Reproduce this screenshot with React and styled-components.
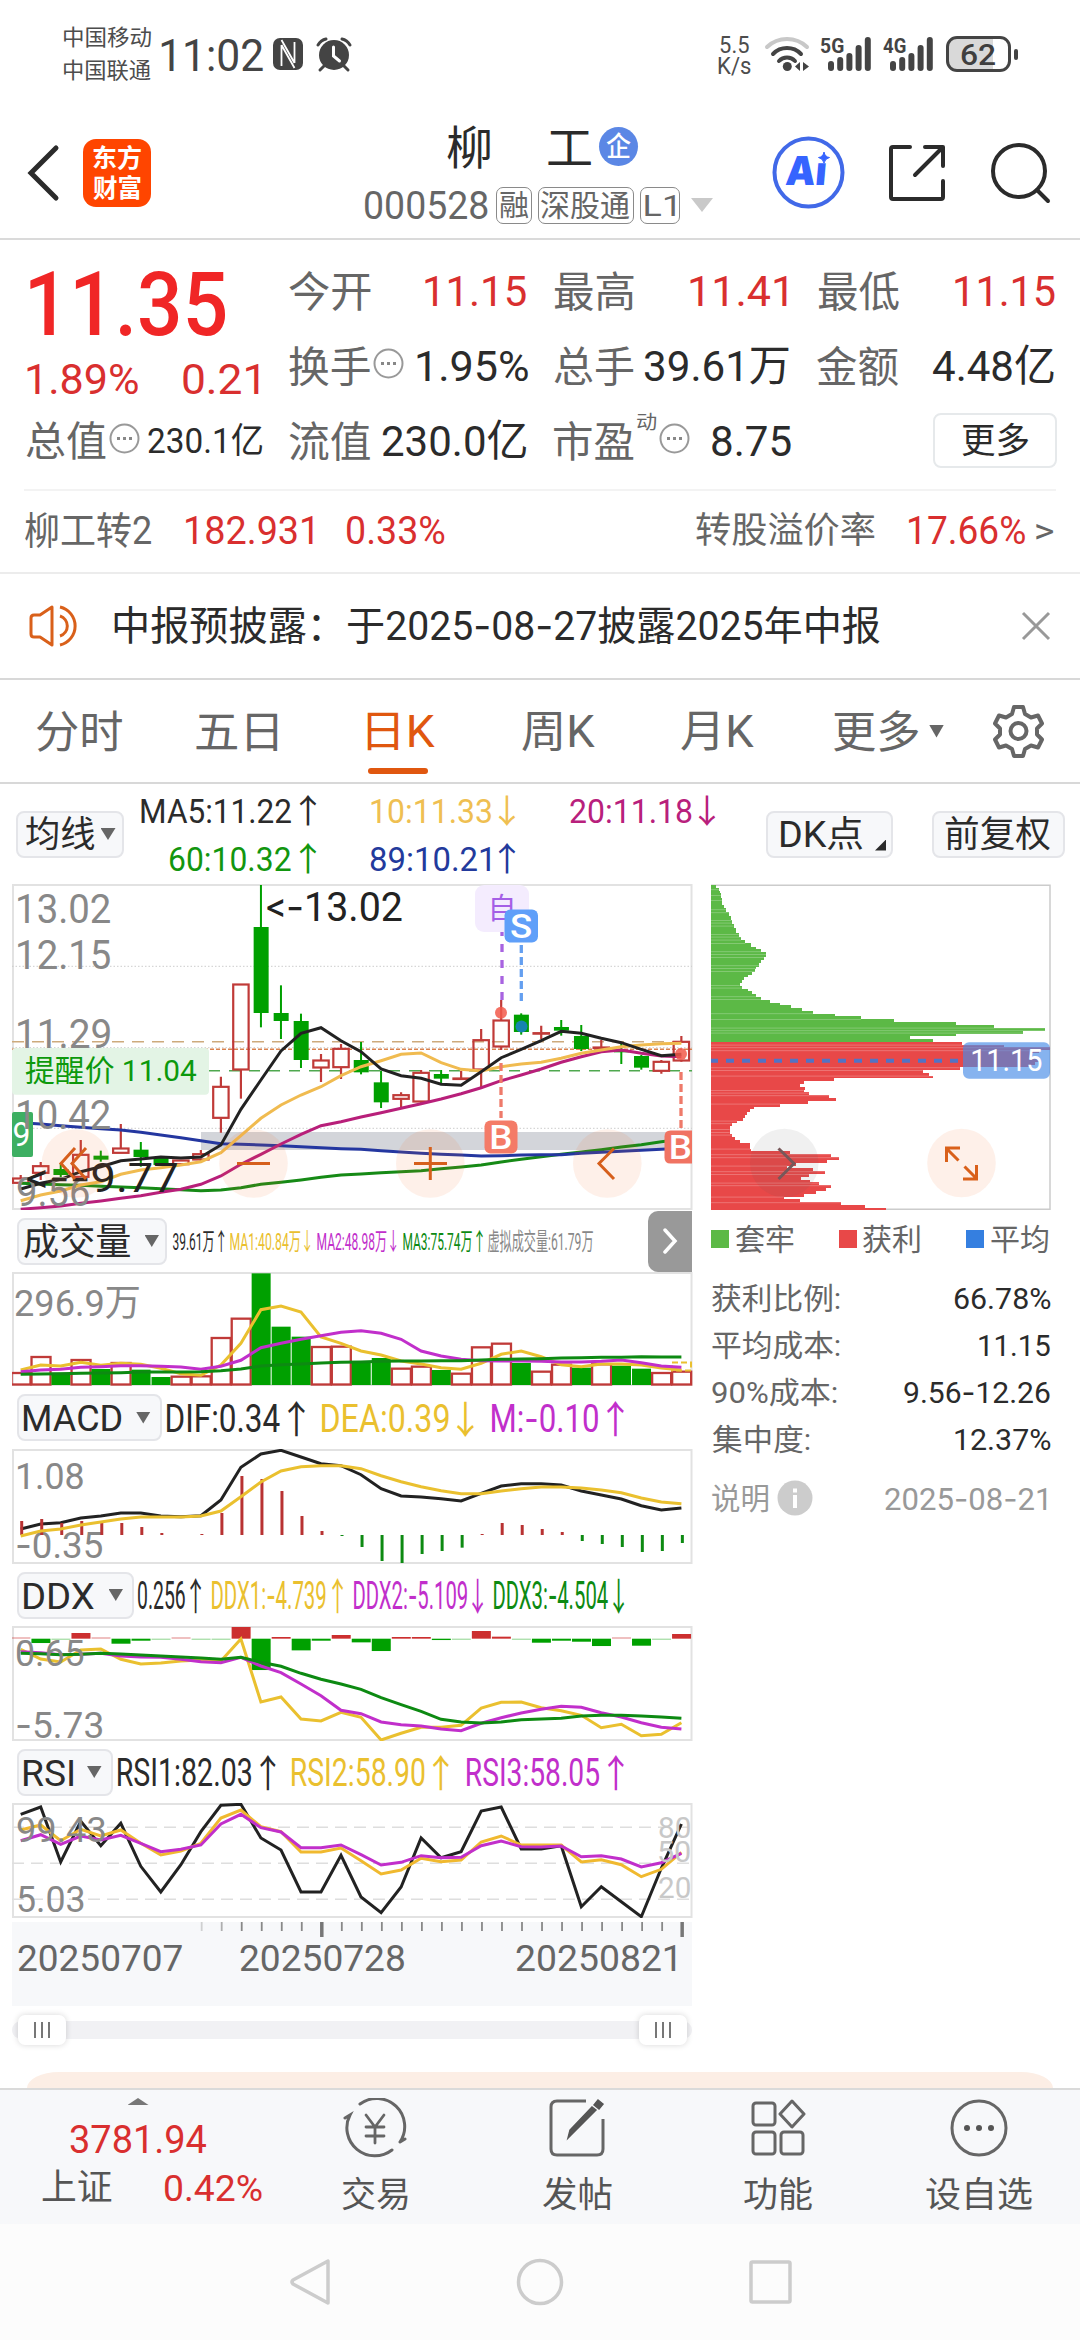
import React from "react";
import styled, { createGlobalStyle } from "styled-components";

const FONT = '"Roboto", "Noto Sans CJK SC", sans-serif';
const DASH_FONT = '"Inter", sans-serif';
const RED = "#d92f2f";
const GREY = "#666";
const DARK = "#2b2b2b";
const YELLOW = "#eac02f";
const PURPLE = "#c12fcb";
const GREEN = "#0d8a12";

const canvas = document.createElement("canvas").getContext("2d");

// hyphens are set in a face with a longer dash
const runs = (text) => text.split(/(-+)/).filter(Boolean);
const isDash = (run) => run[0] === "-";

// measures the ink of a string and returns what is needed to fit it in w
const fit = (text, size, weight, w) => {
  const parts = runs(text);
  let ink = 0;
  let shift = 0;
  parts.forEach((run, i) => {
    canvas.font = `${weight} ${size}px ${isDash(run) ? DASH_FONT : FONT}`;
    const m = canvas.measureText(run);
    if (i === 0) {
      shift = m.actualBoundingBoxLeft;
      ink += shift;
    }
    ink += i === parts.length - 1 ? m.actualBoundingBoxRight : m.width;
  });
  return { scale: w / ink, shift };
};

const Txt = ({ children, size, w, color = DARK, weight = 400, ml = 0, mt = 0 }) => {
  const { scale, shift } = fit(children, size, weight, w);
  const dy = /[\dA-Za-z]/.test(children) ? 0.5 : size * 0.04;
  return (
    <TextBox $w={w} $size={size} $color={color} $weight={weight} $ml={ml} $mt={mt}>
      <Glyphs style={{ transform: `translateY(${dy}px) scaleX(${scale}) translateX(${shift}px)` }}>
        {runs(children).map((run, i) => (isDash(run) ? <Dash key={i}>{run}</Dash> : run))}
      </Glyphs>
    </TextBox>
  );
};

const ChartText = ({ children, x, y, w, size, color = "#888", weight = 400 }) => {
  const { scale, shift } = fit(children, size, weight, w);
  return (
    <text
      transform={`translate(${x} ${y}) scale(${scale} 1) translate(${shift} 0)`}
      fontFamily={FONT}
      fontSize={size}
      fontWeight={weight}
      fill={color}
    >
      {runs(children).map((run, i) => (
        <tspan key={i} fontFamily={isDash(run) ? DASH_FONT : FONT}>{run}</tspan>
      ))}
    </text>
  );
};

const px = (i) => 20.7 + 20.02 * i;
const points = (list, y0) =>
  list.map((v, i) => `${px(i).toFixed(1)},${(y0 + v / 3).toFixed(1)}`).join(" ");

const Line = ({ data, y0, color, width = 3 }) => (
  <polyline points={points(data, y0)} fill="none" stroke={color} strokeWidth={width} />
);

// [up, high, body top, body bottom, low]
const candles = [
  [1, 915, 924, 940, 940],
  [1, 876, 887, 910, 930],
  [0, 880, 897, 915, 925],
  [1, 810, 853, 922, 925],
  [0, 842, 857, 869, 875],
  [1, 762, 834, 850, 850],
  [0, 816, 839, 861, 890],
  [0, 862, 862, 885, 885],
  [1, 870, 870, 884, 884],
  [1, 840, 851, 870, 875],
  [1, 620, 649, 745, 788],
  [1, 342, 342, 600, 686],
  [0, 45, 171, 429, 472],
  [0, 346, 429, 453, 507],
  [0, 431, 453, 570, 594],
  [1, 552, 570, 594, 636],
  [1, 522, 535, 593, 627],
  [0, 516, 570, 607, 613],
  [0, 602, 637, 697, 714],
  [1, 667, 674, 688, 712],
  [1, 600, 607, 696, 698],
  [0, 600, 612, 626, 640],
  [1, 602, 624, 627, 628],
  [1, 477, 509, 600, 655],
  [1, 390, 450, 531, 540],
  [0, 430, 434, 486, 494],
  [1, 467, 488, 491, 508],
  [0, 450, 471, 482, 497],
  [0, 465, 498, 537, 543],
  [1, 510, 531, 534, 548],
  [0, 520, 543, 547, 582],
  [0, 555, 558, 593, 599],
  [1, 570, 574, 604, 611],
  [1, 498, 514, 573, 575],
];

const ma5 = [957, 940, 928, 905, 890, 872, 867, 861, 864, 861, 825, 718, 630, 543, 490, 473, 512, 545, 597, 617, 625, 643, 646, 605, 563, 538, 512, 484, 490, 505, 518, 538, 557, 553];
const ma10 = [992, 975, 963, 945, 935, 913, 900, 893, 885, 875, 848, 797, 745, 705, 675, 650, 617, 590, 572, 553, 549, 578, 598, 603, 590, 582, 577, 565, 550, 540, 530, 525, 521, 520];
const ma20 = [1018, 1013, 1008, 1000, 993, 985, 977, 967, 958, 943, 918, 883, 853, 822, 793, 767, 755, 741, 728, 715, 701, 687, 671, 653, 632, 615, 597, 577, 560, 545, 540, 550, 558, 560];
const ma60 = [940, 942, 944, 946, 949, 951, 953, 956, 959, 962, 960, 953, 943, 937, 930, 922, 915, 912, 908, 905, 902, 896, 891, 885, 876, 868, 860, 853, 846, 839, 831, 824, 815, 808];
const ma89 = [758, 762, 767, 772, 776, 780, 787, 795, 803, 812, 821, 823, 825, 827, 830, 833, 836, 838, 842, 846, 850, 853, 855, 858, 857, 855, 854, 854, 850, 847, 844, 841, 838, 835];

// [top, right edge] of every step of the chip distribution
const trapped = [[45, 78], [54, 86], [62, 89], [70, 92], [85, 96], [105, 102], [115, 108], [127, 116], [138, 121], [150, 124], [162, 130], [175, 137], [190, 147], [200, 152], [210, 165], [220, 182], [230, 198], [238, 213], [246, 228], [262, 222], [270, 213], [280, 207], [290, 198], [298, 194], [306, 186], [315, 172], [322, 161], [330, 154], [340, 148], [348, 155], [356, 172], [364, 186], [373, 198], [381, 212], [389, 238], [398, 270], [406, 303], [415, 336], [423, 368], [431, 434], [439, 512], [448, 610], [456, 797], [464, 911], [473, 1065], [482, 999], [491, 797], [499, 660], [507, 728], [516, 0]];
const profit = [[516, 815], [524, 942], [532, 1079], [541, 1045], [549, 1018], [566, 1045], [576, 1035], [584, 1018], [591, 808], [600, 697], [608, 715], [617, 728], [625, 431], [634, 340], [642, 328], [651, 344], [659, 340], [667, 356], [676, 416], [684, 437], [693, 354], [701, 269], [710, 191], [718, 180], [727, 171], [735, 164], [743, 158], [752, 141], [760, 124], [768, 118], [793, 124], [802, 135], [810, 148], [819, 180], [828, 178], [836, 183], [844, 298], [853, 423], [861, 446], [870, 410], [878, 318], [887, 290], [895, 367], [904, 405], [912, 356], [921, 333], [929, 360], [937, 386], [946, 422], [954, 408], [963, 378], [971, 340], [980, 280], [988, 330], [996, 453], [1005, 525], [1014, 587], [1020, 0]];
const seams = [58, 75, 90, 118, 127, 150, 158, 167, 192, 200, 209, 219, 244, 252, 261, 286, 294, 303, 345, 353, 379, 387, 430, 447, 473, 481, 488, 524, 532, 541, 592, 600, 617, 660, 668, 676, 701, 752, 760, 777, 786, 794, 836, 853, 862, 887, 904, 912, 938, 946, 980, 997];

// r = rising, g = falling, then the top of the bar
const volume = "r516 r468 g518 r477 g507 r486 g509 g531 r527 r526 r411 r353 g220 g380 g410 r438 r437 g484 g474 r503 r497 g510 r518 r439 r428 g489 r512 r491 g503 r490 g497 g506 r516 r512"
  .split(" ")
  .map((s) => [s[0], Number(s.slice(1))]);
const vol1 = [510, 495, 498, 487, 496, 490, 493, 505, 521, 526, 495, 430, 329, 318, 336, 411, 430, 453, 465, 483, 492, 503, 508, 490, 463, 453, 470, 494, 500, 492, 492, 495, 504, 510];
const vol2 = [515, 510, 508, 502, 500, 497, 497, 499, 501, 508, 499, 481, 443, 430, 418, 407, 397, 392, 400, 418, 453, 468, 478, 482, 483, 483, 484, 486, 486, 484, 480, 488, 498, 502];
const vol3 = [523, 522, 521, 520, 519, 518, 516, 516, 516, 515, 512, 507, 498, 494, 492, 489, 487, 486, 484, 483, 483, 482, 482, 480, 478, 477, 476, 474, 473, 472, 472, 470, 471, 471];

const macd = [273, 267, 279, 273, 279, 279, 291, 309, 315, 312, 249, 138, 147, 183, 258, 303, 318, 351, 393, 399, 372, 363, 353, 312, 279, 285, 297, 306, 333, 342, 351, 366, 363, 339];
const dif = [297, 282, 278, 264, 258, 249, 249, 258, 260, 257, 210, 112, 72, 61, 81, 101, 107, 134, 176, 198, 201, 206, 213, 190, 168, 161, 161, 165, 183, 195, 207, 227, 240, 234];
const dea = [318, 303, 297, 285, 276, 267, 261, 261, 261, 258, 243, 200, 156, 123, 110, 107, 107, 116, 137, 155, 170, 182, 191, 191, 183, 176, 171, 171, 174, 180, 188, 204, 216, 221];

const ddx = [622, 639, 629, 609, 622, 641, 632, 629, 622, 629, 629, 591, 720, 621, 661, 632, 615, 637, 663, 621, 621, 630, 629, 603, 620, 629, 638, 632, 635, 648, 622, 647, 629, 612];
const ddx1 = [658, 687, 696, 660, 657, 688, 702, 699, 693, 690, 693, 627, 816, 801, 867, 873, 847, 862, 930, 910, 892, 892, 886, 834, 817, 816, 833, 842, 856, 893, 883, 917, 913, 878];
const ddx2 = [665, 668, 674, 673, 670, 678, 681, 682, 688, 695, 698, 682, 708, 728, 762, 797, 841, 851, 876, 884, 888, 897, 902, 880, 863, 849, 838, 829, 832, 848, 861, 878, 892, 897];
const ddx3 = [670, 671, 674, 673, 670, 672, 675, 678, 681, 684, 688, 682, 697, 709, 730, 748, 762, 778, 803, 824, 844, 868, 876, 879, 876, 869, 867, 865, 858, 856, 856, 858, 861, 865];

const rsi1 = [223, 201, 366, 244, 317, 250, 379, 456, 374, 275, 196, 193, 294, 330, 456, 456, 346, 471, 518, 441, 294, 353, 335, 213, 201, 327, 327, 317, 500, 440, 485, 530, 385, 252];
const rsi2 = [270, 255, 302, 268, 288, 270, 310, 345, 333, 310, 234, 210, 260, 275, 336, 336, 324, 362, 402, 390, 355, 365, 360, 306, 288, 315, 315, 315, 366, 359, 374, 410, 388, 337];
const rsi3 = [302, 284, 313, 288, 300, 286, 310, 335, 328, 315, 252, 223, 263, 276, 323, 323, 315, 344, 375, 367, 347, 353, 352, 317, 303, 320, 321, 318, 350, 347, 357, 381, 368, 340];

const StatusBar = () => (
  <Status>
    <Stack $ml={64} $pt={20} $row={33}>
      <Txt size={22} w={87} color="#4d4d4d">中国移动</Txt>
      <Txt size={22} w={87} color="#4d4d4d">中国联通</Txt>
    </Stack>
    <Txt size={45} w={102} ml={10} color="#444">11:02</Txt>
    <Icon $ml={10} width="30" height="34" viewBox="0 0 30 34">
      <rect x="0" y="1" width="30" height="32" rx="7" fill="#444" />
      <path d="M8.500 8v21M21.500 5v21M8.500 3l13 23M8.500 8l13 23" stroke="#fff" strokeWidth="1.800" fill="none" />
    </Icon>
    <Icon $ml={13} width="36" height="34" viewBox="0 0 36 34">
      <circle cx="18" cy="18" r="15" fill="#444" />
      <path d="M2 8q3-5 8-6M34 8q-3-5-8-6M8 29l-4 4M28 29l4 4" stroke="#444" strokeWidth="3" strokeLinecap="round" fill="none" />
      <path d="M17.500 10v9l6 5" stroke="#fff" strokeWidth="3" fill="none" strokeLinecap="round" />
    </Icon>
    <Stack $ml={366} $pt={33} $row={21.5}>
      <Txt size={24} w={29} ml={2} color="#4d4d4d">5.5</Txt>
      <Txt size={24} w={33} color="#4d4d4d">K/s</Txt>
    </Stack>
    <Icon $ml={13} width="46" height="36" viewBox="0 0 46 36">
      <g fill="none" strokeLinecap="round" strokeWidth="4">
        <path d="M3 11A29 29 0 0 1 43 11" stroke="#c8c8c8" />
        <path d="M9 18A19.6 19.6 0 0 1 37 18" stroke="#444" />
        <path d="M15 25A11 11 0 0 1 31 25" stroke="#444" />
      </g>
      <circle cx="23.3" cy="30.5" r="4.5" fill="#444" />
      <path d="M36 26v9l-5-4.500zM39 26l6 4.500-6 4.500z" fill="#444" />
    </Icon>
    <Signal label="5G" ml={11} />
    <Signal label="4G" ml={12} />
    <Battery>
      <Txt size={30} w={34} weight={500} color="#3f3f3f">62</Txt>
    </Battery>
    <BatteryNub />
  </Status>
);

const Signal = ({ label, ml }) => (
  <Icon $ml={ml} width="50" height="34" viewBox="0 0 50 34">
    <ChartText x={0} y={16} w={23} size={21} weight={700} color="#444">{label}</ChartText>
    {[10, 14, 18, 26, 34].map((h, i) => (
      <rect key={h} x={7 + i * 9.2} y={34 - h} width="6" height={h} rx="3" fill="#444" />
    ))}
  </Icon>
);

const Header = () => (
  <HeaderBar>
    <Icon $ml={27} width="34" height="58" viewBox="0 0 34 58">
      <path d="M29 4L4 29l25 25" fill="none" stroke="#2b2b2b" strokeWidth="5" strokeLinecap="round" />
    </Icon>
    <Logo>
      <Txt size={25} w={48} weight={700} color="#fff">东方</Txt>
      <Txt size={25} w={48} weight={700} color="#fff">财富</Txt>
    </Logo>
    <TitleBlock>
      <TitleRow>
        <Txt size={46} w={43} ml={82}>柳</Txt>
        <Txt size={46} w={43} ml={58}>工</Txt>
        <Badge>
          <Txt size={27} w={25} weight={500} color="#fff">企</Txt>
        </Badge>
      </TitleRow>
      <TitleRow>
        <Txt size={38} w={123} color={GREY}>000528</Txt>
        <Tag $w={36.5} $ml={7.5}><Txt size={29} w={28} color={GREY}>融</Txt></Tag>
        <Tag $w={96.5} $ml={5.5}><Txt size={30} w={89} color={GREY}>深股通</Txt></Tag>
        <Tag $w={40.5} $ml={5.5}><Txt size={30} w={30} color={GREY}>L1</Txt></Tag>
        <Caret $ml={11} $w={22} $h={14} $color="#c9c9c9" />
      </TitleRow>
    </TitleBlock>
    <Icon $ml={60} width="73" height="73" viewBox="0 0 73 73">
      <circle cx="36.500" cy="36.500" r="34" fill="none" stroke="#4169e8" strokeWidth="4" />
      <text x="17" y="49.500" transform="skewX(-5)" fontFamily="Inter" fontWeight="900" fontSize="40" fill="#3664ff" textLength="41" lengthAdjust="spacingAndGlyphs">Aı</text>
      <path d="M52 16q1 5 5.500 5.500q-4.500 1-5.500 5.500q-1-4.500-5.500-5.500q4.500-.5 5.500-5.500z" fill="#3664ff" stroke="#3664ff" />
    </Icon>
    <Icon $ml={43} width="58" height="58" viewBox="0 0 58 58">
      <path d="M22 3H5q-2 0-2 2v48q0 2 2 2h48q2 0 2-2V37M37 3h18v19M54 4L27 31" fill="none" stroke="#2b2b2b" strokeWidth="4" strokeLinecap="round" strokeLinejoin="round" />
    </Icon>
    <Icon $ml={45} width="60" height="60" viewBox="0 0 60 60">
      <circle cx="28" cy="28" r="26" fill="none" stroke="#2b2b2b" strokeWidth="4" />
      <path d="M46 47l11 11" stroke="#2b2b2b" strokeWidth="4" strokeLinecap="round" />
    </Icon>
  </HeaderBar>
);

const Dots = ({ ml, mt = -5 }) => (
  <Icon $ml={ml} $mt={mt} width="31" height="31" viewBox="0 0 31 31">
    <circle cx="15.500" cy="15.500" r="14" fill="none" stroke="#999" strokeWidth="2" />
    <path d="M8 15.500h3M14 15.500h3M20 15.500h3" stroke="#888" strokeWidth="3" />
  </Icon>
);

const Quote = () => (
  <QuoteArea>
    <QuoteLeft>
      <Row $h={100}>
        <Txt size={89} w={195} ml={30} weight={500} color="#f02626">11.35</Txt>
      </Row>
      <Row $h={50}>
        <Txt size={43} w={111} ml={27} color={RED}>1.89%</Txt>
        <Txt size={43} w={76} ml={45} color={RED}>0.21</Txt>
      </Row>
      <Row $h={75}>
        <Txt size={41} w={80} ml={25.5} color={GREY}>总值</Txt>
        <Dots ml={3.5} />
        <Txt size={35} w={114} ml={8}>230.1亿</Txt>
      </Row>
    </QuoteLeft>
    <QuoteRight>
      <Row $h={75}>
        <Txt size={42} w={81.5} color={GREY}>今开</Txt>
        <Txt size={43} w={101} ml={54.5} color={RED}>11.15</Txt>
        <Txt size={42} w={80} ml={27.5} color={GREY}>最高</Txt>
        <Txt size={43} w={97} ml={56.5} color={RED}>11.41</Txt>
        <Txt size={42} w={81} ml={30.5} color={GREY}>最低</Txt>
        <Txt size={43} w={100} ml={56} color={RED}>11.15</Txt>
      </Row>
      <Row $h={75}>
        <Txt size={42} w={81.5} color={GREY}>换手</Txt>
        <Dots ml={2.5} />
        <Txt size={43} w={111} ml={13}>1.95%</Txt>
        <Txt size={42} w={80} ml={25.5} color={GREY}>总手</Txt>
        <Txt size={43} w={144} ml={11.5}>39.61万</Txt>
        <Txt size={42} w={81} ml={28} color={GREY}>金额</Txt>
        <Txt size={43} w={121} ml={35}>4.48亿</Txt>
      </Row>
      <Row $h={75}>
        <Txt size={42} w={81.5} color={GREY}>流值</Txt>
        <Txt size={43} w={144.5} ml={11}>230.0亿</Txt>
        <Txt size={42} w={80} ml={27.5} color={GREY}>市盈</Txt>
        <Txt size={19} w={19} ml={3} mt={-39} color={GREY}>动</Txt>
        <Dots ml={3} />
        <Txt size={43} w={79} ml={22}>8.75</Txt>
        <MoreButton>
          <Txt size={35} w={67}>更多</Txt>
        </MoreButton>
      </Row>
    </QuoteRight>
  </QuoteArea>
);

const Bond = () => (
  <BondRow>
    <Txt size={38} w={126} ml={1} color={GREY}>柳工转2</Txt>
    <Txt size={38} w={127} ml={35} color={RED}>182.931</Txt>
    <Txt size={38} w={98} ml={34} color={RED}>0.33%</Txt>
    <Txt size={36} w={179} ml={250.5} color={GREY}>转股溢价率</Txt>
    <Txt size={38} w={116.5} ml={34} color={RED}>17.66%</Txt>
    <Txt size={35} w={17} ml={11} color={GREY}>&gt;</Txt>
  </BondRow>
);

const Notice = () => (
  <NoticeRow>
    <Icon $ml={29} width="53" height="44" viewBox="0 0 53 44">
      <g fill="none" stroke="#d9601a" strokeWidth="3">
        <path d="M23 3v38L11 33H5q-3 0-3-3V14q0-3 3-3h6z" strokeLinejoin="round" />
        <path d="M31 12a10.500 10.500 0 0 1 0 20M31 3a19.500 19.500 0 0 1 0 38" />
      </g>
    </Icon>
    <Txt size={40} w={766} ml={32}>中报预披露：于2025-08-27披露2025年中报</Txt>
    <Icon $ml={140.5} width="30" height="30" viewBox="0 0 30 30">
      <path d="M2 2l26 26M28 2L2 28" stroke="#999" strokeWidth="3" />
    </Icon>
  </NoticeRow>
);

const Tabs = () => (
  <TabRow>
    <Txt size={44} w={86.5} ml={36} color={GREY}>分时</Txt>
    <Txt size={44} w={81.5} ml={73.5} color={GREY}>五日</Txt>
    <ActiveTab>
      <Txt size={44} w={68} color="#e0570f">日K</Txt>
    </ActiveTab>
    <Txt size={44} w={73} ml={87} color={GREY}>周K</Txt>
    <Txt size={44} w={73} ml={86} color={GREY}>月K</Txt>
    <Txt size={44} w={84.5} ml={80} color={GREY}>更多</Txt>
    <Caret $ml={10.500} $w={15} $h={13} $color={GREY} />
    <Icon $ml={49} width="51" height="54" viewBox="0 0 51 54">
      <g fill="none" stroke="#666" strokeWidth="4" strokeLinejoin="round">
        <path d="M21 3h9l2 7 6 3.500 7-2 4 8-5 5v6l5 5-4 8-7-2-6 3.500-2 7h-9l-2-7-6-3.500-7 2-4-8 5-5v-6l-5-5 4-8 7 2 6-3.500z" />
        <circle cx="25.500" cy="27" r="8" />
      </g>
    </Icon>
  </TabRow>
);

const Averages = () => (
  <AverageRow>
    <Chip $w={108} $ml={16}>
      <Txt size={36} w={68.5} ml={8}>均线</Txt>
      <Caret $ml={6} $w={15} $h={12} $color={GREY} />
    </Chip>
    <Legend>
      <Row $h={48}>
        <Txt size={33} w={150.5}>MA5:11.22</Txt>
        <Txt size={33} w={18} ml={8}>↑</Txt>
        <Txt size={33} w={120.5} ml={53.500} color="#efbf52">10:11.33</Txt>
        <Txt size={33} w={18} ml={7} color="#efbf52">↓</Txt>
        <Txt size={33} w={121.500} ml={53.500} color="#b8207c">20:11.18</Txt>
        <Txt size={33} w={18} ml={7} color="#b8207c">↓</Txt>
      </Row>
      <Row $h={48}>
        <Txt size={33} w={121} ml={29.500} color="#12960f">60:10.32</Txt>
        <Txt size={33} w={18} ml={8} color="#12960f">↑</Txt>
        <Txt size={33} w={120} ml={53} color="#233a9c">89:10.21</Txt>
        <Txt size={33} w={18} ml={7.500} color="#233a9c">↑</Txt>
      </Row>
    </Legend>
    <Chip $w={127} $ml={50}>
      <Txt size={36} w={83} ml={12}>DK点</Txt>
      <Corner />
    </Chip>
    <Chip $w={133} $ml={39}>
      <Txt size={36} w={105} ml={11}>前复权</Txt>
    </Chip>
  </AverageRow>
);

const KLineChart = () => (
  <Chart width="681" height="326" viewBox="12 884 681 326">
    <rect x="13" y="885" width="678.500" height="324" fill="none" stroke="#e2e2e2" strokeWidth="2" />
    <rect x="201" y="1132" width="491" height="18" fill="#d3d5da" />
    <path d="M12 966.300H692M12 1128.300H692M12 1047.700H692" stroke="#ccc" strokeDasharray="1.500 2" />
    <path d="M12 1041.700H692" stroke="#cdaa7c" strokeWidth="1.500" strokeDasharray="12 8" />
    <path d="M12 1049.300H692" stroke="#d9824f" strokeWidth="1.500" strokeDasharray="4 2" />
    <path d="M209 1070.700H692" stroke="#4fa84f" strokeWidth="1.500" strokeDasharray="11 9" />
    {candles.map(([up, high, top, bottom, low], i) => {
      const y = (v) => 870 + v / 3;
      const x = px(i);
      const h = (bottom - top) / 3;
      return up ? (
        <g key={i} stroke="#c03a38" strokeWidth="2.200" fill="none">
          <path d={`M${x} ${y(high)}V${y(top)}M${x} ${y(bottom)}V${y(low)}`} />
          <rect x={x - 7.700} y={y(top) + 0.500} width="15.400" height={Math.max(h - 1, 0.500)} />
        </g>
      ) : (
        <g key={i} fill="#00a000">
          <rect x={x - 1} y={y(high)} width="2" height={(low - high) / 3} />
          <rect x={x - 7.300} y={y(top)} width="15" height={h} />
        </g>
      );
    })}
    <Line data={ma60} y0={870} color="#168a16" />
    <Line data={ma89} y0={870} color="#2437a0" />
    <Line data={ma20} y0={870} color="#b81f7a" />
    <Line data={ma10} y0={870} color="#f0bb50" />
    <Line data={ma5} y0={870} color="#222" />
    <rect x="12" y="1048" width="197" height="46.700" rx="4" fill="#e3f4e5" />
    <ChartText x={18} y={923} w={92} size={40}>13.02</ChartText>
    <ChartText x={18} y={969} w={92} size={40}>12.15</ChartText>
    <ChartText x={18} y={1048} w={92} size={40}>11.29</ChartText>
    <rect x="12" y="1112" width="21" height="45" rx="2" fill="#3daf62" />
    <ChartText x={13.500} y={1146} w={15} size={34} color="#fff">9</ChartText>
    <ChartText x={18} y={1129} w={92} size={40}>10.42</ChartText>
    <ChartText x={17} y={1206} w={72} size={40}>9.56</ChartText>
    <ChartText x={25} y={1081} w={172} size={30} color="#0c990c">提醒价 11.04</ChartText>
    <ChartText x={267} y={921} w={134.500} size={40} color="#222">&lt;-13.02</ChartText>
    <ChartText x={27} y={1191.700} w={150} size={40} color="#222">&lt;--9.77</ChartText>
    <rect x="475" y="885" width="54" height="47" rx="9" fill="#f4ecfe" />
    <ChartText x={491.500} y={919} w={21} size={29} color="#a55fe6">自</ChartText>
    <path d="M502 932V1000" stroke="#a863e0" strokeWidth="3.300" strokeDasharray="8 8" strokeDashoffset="4" />
    <rect x="504.500" y="909.500" width="33.500" height="33" rx="6" fill="#5f9ff9" />
    <ChartText x={511} y={938} w={20} size={33} weight={500} color="#fff">S</ChartText>
    <path d="M521.300 945V1001" stroke="#649ff0" strokeWidth="3.300" strokeDasharray="8 4" />
    <circle cx="501" cy="1012.700" r="6" fill="#f2594a" opacity=".85" />
    <circle cx="521.500" cy="1026.500" r="6" fill="#1683b0" />
    <circle cx="681" cy="1054" r="6" fill="#f2594a" opacity=".85" />
    <path d="M501 1063V1118M681 1072V1128" stroke="#ee7a6a" strokeWidth="3.300" strokeDasharray="8 4" />
    <rect x="484.500" y="1120.500" width="33" height="33" rx="6" fill="#f47b67" />
    <ChartText x={491.500} y={1149} w={20} size={33} weight={500} color="#fff">B</ChartText>
    <path d="M692 1130.500H670.500q-6 0-6 6v21q0 6 6 6H692z" fill="#f07362" />
    <ChartText x={671} y={1159} w={20} size={33} weight={500} color="#fff">B</ChartText>
    {[76, 253.500, 430.300, 607.300].map((x) => (
      <circle key={x} cx={x} cy="1163.500" r="34.300" fill="rgba(250,110,40,.1)" />
    ))}
    <path d="M75 1148l-14 15.500 14 15.500M86 1148l-14 15.500 14 15.500M237 1163.500h33M414 1163.500h33M430.300 1147v33M614 1148.500l-15 15 15 15.500" fill="none" stroke="#d65f1c" strokeWidth="3" />
  </Chart>
);

const steps = (list) =>
  list.slice(0, -1).map(([top, right], i) => (
    <rect key={top} x="711" y={870 + top / 3} width={(right - 62) / 3} height={(list[i + 1][0] - top) / 3 + 0.1} />
  ));

const ChipChart = () => (
  <Chart width="342" height="326" viewBox="710 884 342 326">
    <path d="M711 885.300H1050V1209.300H711" fill="none" stroke="#ccc" strokeWidth="1.500" />
    <g fill="#5cb946" shapeRendering="crispEdges">{steps(trapped)}</g>
    <g fill="#e84848" shapeRendering="crispEdges">{steps(profit)}</g>
    {seams.map((v) => {
      const row = [...trapped.slice(0, -1), ...profit].filter(([top]) => top <= v).pop();
      return <rect key={v} x="711" y={870 + v / 3} width={(row[1] - 62) / 3} height=".8" fill="rgba(255,255,255,.3)" />;
    })}
    <path d="M711 1060.700H963" stroke="#5273c4" strokeWidth="4" strokeDasharray="8 8" strokeDashoffset="1" />
    <rect x="963" y="1042.300" width="87" height="36.500" rx="6" fill="rgba(71,139,230,.66)" />
    <ChartText x={972} y={1071} w={70} size={31} color="#fff">11.15</ChartText>
    <circle cx="784.300" cy="1163" r="34.300" fill="rgba(90,90,90,.09)" />
    <path d="M778.500 1148.500l15.500 15-15.500 15.500" fill="none" stroke="#77585a" strokeWidth="3" />
    <circle cx="961.500" cy="1163" r="34.300" fill="rgba(250,110,40,.1)" />
    <g fill="none" stroke="#d9601a" strokeWidth="3">
      <path d="M960 1148h-13.500v14M947 1149l11.500 11.500M963 1179h13.500v-14M976 1178l-11.500-11.500" />
    </g>
  </Chart>
);

const VolumeChart = () => (
  <Chart width="681" height="114" viewBox="12 1272 681 114">
    <rect x="13" y="1273" width="678.500" height="112" fill="none" stroke="#e2e2e2" strokeWidth="2" />
    <ChartText x={15} y={1315.700} w={124} size={37}>296.9万</ChartText>
    {volume.map(([c, top], i) => {
      const y = 1200 + top / 3;
      return c === "g" ? (
        <rect key={i} x={px(i) - 9.300} y={y} width="19" height={1385 - y} fill="#00a000" />
      ) : (
        <rect key={i} x={px(i) - 9.200} y={y + 1} width="19" height={1383.500 - y} fill="none" stroke="#c03a38" strokeWidth="2.300" />
      );
    })}
    <rect x="672" y="1362.500" width="19" height="8" fill="none" stroke={YELLOW} strokeWidth="2" strokeDasharray="6 3" />
    <Line data={vol1} y0={1200} color={YELLOW} />
    <Line data={vol2} y0={1200} color={PURPLE} />
    <Line data={vol3} y0={1200} color={GREEN} />
  </Chart>
);

const MacdChart = () => (
  <Chart width="681" height="115" viewBox="12 1449 681 115">
    <rect x="13" y="1450" width="678.500" height="113" fill="none" stroke="#e2e2e2" strokeWidth="2" />
    <Line data={dif} y0={1430} color="#222" />
    <ChartText x={18} y={1488.700} w={65.500} size={36}>1.08</ChartText>
    <ChartText x={17} y={1558.300} w={85} size={36}>-0.35</ChartText>
    {macd.map((v, i) => (
      <path key={i} d={`M${px(i) + 1} 1535V${1430 + v / 3}`} stroke={v < 315 ? "#b83232" : GREEN} strokeWidth="3" />
    ))}
    <Line data={dea} y0={1430} color={YELLOW} />
  </Chart>
);

const DdxChart = () => (
  <Chart width="681" height="115" viewBox="12 1626 681 115">
    <rect x="13" y="1627" width="678.500" height="113" fill="none" stroke="#e2e2e2" strokeWidth="2" />
    {ddx.map((v, i) => {
      const up = v < 626;
      const faint = v === 622 || v === 629;
      return (
        <rect
          key={i}
          x={px(i) - 9.300}
          y={up ? 1430 + v / 3 : 1638.700}
          width="19"
          height={Math.abs(v - 626) / 3}
          fill={up ? "#cc2f2f" : "#00a000"}
          opacity={faint ? 0.45 : 1}
        />
      );
    })}
    <Line data={ddx1} y0={1430} color={YELLOW} />
    <Line data={ddx2} y0={1430} color={PURPLE} />
    <Line data={ddx3} y0={1430} color={GREEN} />
    <ChartText x={17} y={1665.700} w={66.500} size={36}>0.65</ChartText>
    <ChartText x={17} y={1737.700} w={85} size={36}>-5.73</ChartText>
  </Chart>
);

const RsiChart = () => (
  <Chart width="681" height="115" viewBox="12 1803 681 115">
    <rect x="13" y="1804" width="678.500" height="113" fill="none" stroke="#e2e2e2" strokeWidth="2" />
    <path d="M12 1827.300H692M12 1863.300H692M12 1899.300H692" stroke="#dedede" strokeWidth="1.500" strokeDasharray="12 7" />
    <Line data={rsi1} y0={1740} color="#222" />
    <Line data={rsi2} y0={1740} color="#f0b92f" />
    <Line data={rsi3} y0={1740} color={PURPLE} />
    <ChartText x={17} y={1842} w={87.500} size={36}>99.43</ChartText>
    <ChartText x={18} y={1912} w={65.500} size={36}>5.03</ChartText>
    <ChartText x={659} y={1838} w={31} size={29} color="#c8c8c8">80</ChartText>
    <ChartText x={659} y={1862} w={31} size={29} color="#c8c8c8">50</ChartText>
    <ChartText x={659} y={1898} w={31} size={29} color="#c8c8c8">20</ChartText>
  </Chart>
);

const ticks = Array.from({ length: 25 }, (_, i) => i + 9);

const TimeAxis = () => (
  <AxisBox>
    <svg width="681" height="16" viewBox="12 1922 681 16">
      {ticks.map((i) => {
        const big = i === 15 || i === 33;
        return (
          <path
            key={i}
            d={`M${px(i) + 0.800} 1922v${big ? 15 : 9}`}
            stroke={big ? "#777" : "#888"}
            strokeWidth={big ? 3.500 : 1.800}
            opacity={i === 9 ? 0.35 : i === 10 ? 0.65 : 1}
          />
        );
      })}
    </svg>
    <Row $h={38}>
      <Txt size={37} w={164.500} ml={6} color={GREY}>20250707</Txt>
      <Txt size={37} w={164} ml={57.500} color={GREY}>20250728</Txt>
      <Txt size={37} w={160} ml={111.500} color={GREY}>20250821</Txt>
    </Row>
  </AxisBox>
);

const Slider = () => (
  <SliderBox>
    <Track>
      <Handle><i /><i /><i /></Handle>
      <Handle><i /><i /><i /></Handle>
    </Track>
  </SliderBox>
);

const Indicator = ({ name, nameWidth, width, h, size = 38, ml, items, children }) => (
  <Row $h={h}>
    <Chip $w={width} $ml={4.500}>
      <Txt size={37} w={nameWidth} ml={5.500}>{name}</Txt>
      <Caret $ml={14} $w={14.500} $h={12} $color={GREY} />
    </Chip>
    {items.map(([text, w, gap, color], i) => (
      <Txt key={i} size={size} w={w} ml={i ? gap : ml} color={color}>{text}</Txt>
    ))}
    {children}
  </Row>
);

const stats = [
  ["获利比例:", 128, "66.78%", 96.500],
  ["平均成本:", 128, "11.15", 71],
  ["90%成本:", 125, "9.56-12.26", 146],
  ["集中度:", 98, "12.37%", 95.500],
];

const Body = () => (
  <Columns>
    <Left>
      <KLineChart />
      <Indicator
        name="成交量" nameWidth={106.500} width={150.500} h={62} size={24} ml={6}
        items={[
          ["39.61万", 41, 0, DARK], ["↑", 6.500, 4, DARK],
          ["MA1:40.84万", 70.500, 5.500, YELLOW], ["↓", 6.500, 3.500, YELLOW],
          ["MA2:48.98万", 69.500, 6.500, PURPLE], ["↓", 6.500, 3.500, PURPLE],
          ["MA3:75.74万", 69, 6.500, GREEN], ["↑", 7, 3.500, GREEN],
          ["虚拟成交量:61.79万", 105, 5.500, "#888"],
        ]}
      >
        <Drawer>
          <svg width="15" height="26" viewBox="0 0 15 26">
            <path d="M2 2l10 11L2 24" fill="none" stroke="#fff" strokeWidth="3.500" strokeLinecap="round" />
          </svg>
        </Drawer>
      </Indicator>
      <VolumeChart />
      <Indicator
        name="MACD" nameWidth={98} width={145.500} h={63} ml={5}
        items={[
          ["DIF:0.34", 113, 0, DARK], ["↑", 17, 8, DARK],
          ["DEA:0.39", 126.500, 17, YELLOW], ["↓", 17, 8.500, YELLOW],
          ["M:-0.10", 106.500, 17.500, PURPLE], ["↑", 17, 9, PURPLE],
        ]}
      />
      <MacdChart />
      <Indicator
        name="DDX" nameWidth={70.500} width={117.500} h={62} ml={4}
        items={[
          ["0.256", 47, 0, DARK], ["↑", 11, 5, DARK],
          ["DDX1:-4.739", 113.500, 11, YELLOW], ["↑", 11, 6.500, YELLOW],
          ["DDX2:-5.109", 113, 10.500, PURPLE], ["↓", 11, 5.500, PURPLE],
          ["DDX3:-4.504", 114, 11, GREEN], ["↓", 11, 5, GREEN],
        ]}
      />
      <DdxChart />
      <Indicator
        name="RSI" nameWidth={49} width={96.500} h={62} ml={5}
        items={[
          ["RSI1:82.03", 133, 0, DARK], ["↑", 15.500, 9, DARK],
          ["RSI2:58.90", 133, 16.500, YELLOW], ["↑", 16, 8, YELLOW],
          ["RSI3:58.05", 132, 17.500, PURPLE], ["↑", 16, 9, PURPLE],
        ]}
      />
      <RsiChart />
      <TimeAxis />
      <Slider />
    </Left>
    <Right>
      <ChipChart />
      <Row $h={58}>
        <Square $color="#5cb946" $ml={1} />
        <Txt size={30} w={58} ml={7} color={GREY}>套牢</Txt>
        <Square $color="#e84848" $ml={45} />
        <Txt size={30} w={57} ml={6} color={GREY}>获利</Txt>
        <Square $color="#357fe0" $ml={46} />
        <Txt size={30} w={57} ml={7} color={GREY}>平均</Txt>
      </Row>
      <Stats>
        {stats.map(([label, lw, value, vw]) => (
          <StatRow key={label}>
            <Txt size={30} w={lw} color={GREY}>{label}</Txt>
            <Txt size={30} w={vw}>{value}</Txt>
          </StatRow>
        ))}
      </Stats>
      <Row $h={72}>
        <Txt size={30} w={56} ml={2} color="#999">说明</Txt>
        <Icon $ml={9} width="36" height="36" viewBox="0 0 36 36">
          <circle cx="18" cy="18" r="17.500" fill="#ccc" />
          <path d="M18 15v13M18 8.500v4" stroke="#fff" strokeWidth="4" />
        </Icon>
        <Txt size={31} w={162} ml={72} color="#999">2025-08-21</Txt>
      </Row>
    </Right>
  </Columns>
);

const Footer = () => (
  <BottomBar>
    <Index>
      <UpCaret />
      <Row $h={48}>
        <Txt size={39} w={137} ml={70} color={RED}>3781.94</Txt>
      </Row>
      <Row $h={48}>
        <Txt size={36} w={69.500} ml={41.500} color="#555">上证</Txt>
        <Txt size={37} w={97} ml={54} color={RED}>0.42%</Txt>
      </Row>
    </Index>
    <NavItem $ml={53}>
      <svg width="66" height="60" viewBox="0 0 66 60">
        <g fill="none" stroke="#666" strokeWidth="3" strokeLinecap="round">
          <path d="M18 6A28 28 0 0 1 58 44M50 52A28 28 0 0 1 8 17L3 20M58 44l5-3" />
          <path d="M24 17l9 12 9-12M33 29v16M24 29h18M24 38h18" strokeWidth="2.800" />
        </g>
      </svg>
      <Txt size={35} w={66} color="#555">交易</Txt>
    </NavItem>
    <NavItem $ml={82}>
      <svg width="56" height="60" viewBox="0 0 56 60">
        <path d="M37 3H8Q2 3 2 9v42q0 6 6 6h40q6 0 6-6V21" fill="none" stroke="#666" strokeWidth="3" />
        <path d="M47 12L19 40l2-8L43 9zM45 7l4-5 5 4-4 5z" fill="#555" stroke="#555" strokeWidth="1.500" />
      </svg>
      <Txt size={35} w={69} color="#555">发帖</Txt>
    </NavItem>
    <NavItem $ml={81}>
      <svg width="56" height="60" viewBox="0 0 56 60">
        <g fill="none" stroke="#666" strokeWidth="3">
          <rect x="3" y="5" width="22" height="22" rx="3" />
          <rect x="3" y="34" width="22" height="22" rx="3" />
          <rect x="31" y="34" width="22" height="22" rx="3" />
          <path d="M42 3l12 13-12 13-12-13z" strokeLinejoin="round" />
        </g>
      </svg>
      <Txt size={35} w={68} color="#555">功能</Txt>
    </NavItem>
    <NavItem $ml={81}>
      <svg width="60" height="60" viewBox="0 0 60 60">
        <circle cx="30" cy="30" r="27" fill="none" stroke="#666" strokeWidth="3" />
        <circle cx="18" cy="30" r="3" fill="#555" />
        <circle cx="30" cy="30" r="3" fill="#555" />
        <circle cx="42" cy="30" r="3" fill="#555" />
      </svg>
      <Txt size={35} w={106} color="#555">设自选</Txt>
    </NavItem>
  </BottomBar>
);

const App = () => {
  return (
    <Page>
      <GlobalStyle />
      <StatusBar />
      <Header />
      <Quote />
      <Bond />
      <Notice />
      <Tabs />
      <Averages />
      <Body />
      <Promo />
      <Footer />
      <SystemNav>
        <svg width="42" height="48" viewBox="0 0 42 48">
          <path d="M39 3v42L4 26q-2-2 0-4z" fill="none" stroke="#ccc" strokeWidth="3.500" strokeLinejoin="round" />
        </svg>
        <svg width="48" height="48" viewBox="0 0 48 48">
          <circle cx="24" cy="24" r="21.500" fill="none" stroke="#ccc" strokeWidth="3.500" />
        </svg>
        <svg width="43" height="44" viewBox="0 0 43 44">
          <rect x="2" y="2" width="39" height="40" rx="1.500" fill="none" stroke="#ccc" strokeWidth="3.500" />
        </svg>
      </SystemNav>
    </Page>
  );
};

const GlobalStyle = createGlobalStyle`
  * {
    box-sizing: border-box;
  }
  body {
    margin: 0;
    background: #fff;
    font-family: ${FONT};
  }
  svg {
    display: block;
    flex-shrink: 0;
  }
`;

const Page = styled.main`
  width: 1080px;
  height: 2340px;
  overflow: hidden;
  display: flex;
  flex-direction: column;
  background: #fff;
  > * {
    flex-shrink: 0;
  }
`;

const TextBox = styled.span`
  display: block;
  flex-shrink: 0;
  width: ${(p) => p.$w}px;
  height: ${(p) => p.$size}px;
  line-height: ${(p) => p.$size}px;
  font-size: ${(p) => p.$size}px;
  font-weight: ${(p) => p.$weight};
  color: ${(p) => p.$color};
  margin-left: ${(p) => p.$ml}px;
  margin-top: ${(p) => p.$mt}px;
  white-space: pre;
`;

const Glyphs = styled.span`
  display: inline-block;
  vertical-align: top;
  transform-origin: 0 50%;
`;

const Dash = styled.span`
  font-family: ${DASH_FONT};
  line-height: 0;
`;

const Row = styled.div`
  display: flex;
  align-items: center;
  height: ${(p) => p.$h}px;
`;

const Icon = styled.svg`
  margin-left: ${(p) => p.$ml || 0}px;
  margin-top: ${(p) => p.$mt || 0}px;
  overflow: visible;
`;

const Chart = styled.svg`
  overflow: hidden;
`;

const Status = styled.header`
  height: 110px;
  display: flex;
  align-items: center;
  padding-bottom: 2px;
`;

const Stack = styled.div`
  align-self: flex-start;
  margin-left: ${(p) => p.$ml}px;
  padding-top: ${(p) => p.$pt}px;
  display: grid;
  grid-auto-rows: ${(p) => p.$row}px;
  align-items: center;
`;

const Battery = styled.div`
  width: 65px;
  height: 36px;
  margin-left: 12.5px;
  border: 3px solid #444;
  border-radius: 11px;
  background: linear-gradient(90deg, #d9d9d9 44px, #fff 44px);
  display: flex;
  align-items: center;
  justify-content: center;
`;

const BatteryNub = styled.div`
  width: 4px;
  height: 11px;
  margin-left: 3px;
  border-radius: 2px;
  background: #444;
`;

const HeaderBar = styled.div`
  height: 130px;
  border-bottom: 2px solid #dadada;
  display: flex;
  align-items: center;
  padding-bottom: 3px;
`;

const Logo = styled.div`
  width: 68px;
  height: 68px;
  margin-left: 22px;
  border-radius: 13px;
  background: #ff4500;
  display: grid;
  grid-auto-rows: 30px;
  justify-content: center;
  align-content: center;
  align-items: center;
`;

const TitleBlock = styled.div`
  width: 348px;
  margin-left: 214px;
  margin-right: -1px;
  display: grid;
  grid-auto-rows: 59px;
  padding-top: 6px;
`;

const TitleRow = styled.div`
  display: flex;
  align-items: center;
`;

const Badge = styled.div`
  width: 39px;
  height: 39px;
  margin-left: 8px;
  border-radius: 50%;
  background: #5b87e5;
  display: flex;
  align-items: center;
  justify-content: center;
`;

const Tag = styled.div`
  width: ${(p) => p.$w}px;
  height: 37px;
  margin-left: ${(p) => p.$ml}px;
  border: 1.5px solid #8a8a8a;
  border-radius: 7px;
  display: flex;
  align-items: center;
  justify-content: center;
`;

const Caret = styled.i`
  width: ${(p) => p.$w}px;
  height: ${(p) => p.$h}px;
  margin-left: ${(p) => p.$ml}px;
  background: ${(p) => p.$color};
  clip-path: polygon(0 0, 100% 0, 50% 100%);
`;

const UpCaret = styled.i`
  width: 21px;
  height: 7px;
  margin: 8px 0 10px 127.5px;
  background: #777;
  clip-path: polygon(50% 0, 100% 100%, 0 100%);
`;

const QuoteArea = styled.section`
  display: flex;
  height: 251px;
  padding-top: 13px;
`;

const QuoteLeft = styled.div`
  width: 289px;
`;

const QuoteRight = styled.div`
  flex: 1;
`;

const MoreButton = styled.div`
  width: 124px;
  height: 55px;
  margin-left: 142.5px;
  border: 2px solid #e6e9eb;
  border-radius: 8px;
  display: flex;
  align-items: center;
  justify-content: center;
`;

const BondRow = styled.div`
  height: 83px;
  margin: -2px 24px 0;
  border-top: 2px solid #f3f3f3;
  display: flex;
  align-items: center;
  padding-bottom: 3px;
`;

const NoticeRow = styled.div`
  height: 106px;
  border-top: 2px solid #ececec;
  display: flex;
  align-items: center;
`;

const TabRow = styled.nav`
  height: 104px;
  border-top: 2px solid #d8d8d8;
  display: flex;
  align-items: center;
`;

const ActiveTab = styled.div`
  width: 68px;
  height: 102px;
  margin-left: 89.5px;
  display: grid;
  align-items: center;
  position: relative;
  &::after {
    content: "";
    position: absolute;
    left: 1px;
    bottom: 8px;
    width: 60px;
    height: 6px;
    border-radius: 3px;
    background: #e0570f;
  }
`;

const AverageRow = styled.div`
  height: 102px;
  border-top: 2px solid #d8d8d8;
  display: flex;
  align-items: center;
`;

const Legend = styled.div`
  width: 575.5px;
  margin-left: 16.5px;
`;

const Chip = styled.div`
  width: ${(p) => p.$w}px;
  height: 47px;
  margin-left: ${(p) => p.$ml}px;
  border: 2px solid #e4e5e9;
  border-radius: 8px;
  background: #f7f8fa;
  display: flex;
  align-items: center;
  flex-shrink: 0;
`;

const Corner = styled.i`
  width: 11px;
  height: 11px;
  margin-left: 12px;
  margin-top: 22px;
  background: ${DARK};
  clip-path: polygon(100% 0, 100% 100%, 0 100%);
`;

const Columns = styled.section`
  display: flex;
  height: 1188px;
`;

const Left = styled.div`
  width: 681px;
  margin-left: 12px;
`;

const Right = styled.div`
  width: 342px;
  margin-left: 17px;
`;

const Drawer = styled.div`
  width: 44px;
  height: 61px;
  margin-left: auto;
  margin-right: 1px;
  border-radius: 10px 0 0 10px;
  background: #999;
  display: flex;
  align-items: center;
  justify-content: center;
  flex-shrink: 0;
`;

const AxisBox = styled.div`
  width: 680px;
  height: 84px;
  margin-top: 4px;
  background: #f7f8fa;
`;

const SliderBox = styled.div`
  height: 48px;
  display: flex;
  align-items: center;
`;

const Track = styled.div`
  width: 680px;
  height: 18px;
  border-radius: 9px;
  background: #f1f1f4;
  display: flex;
  align-items: center;
  justify-content: space-between;
  padding: 0 5px 0 6px;
`;

const Handle = styled.div`
  width: 48px;
  height: 30px;
  border-radius: 7px;
  background: #fff;
  box-shadow: 0 0 6px rgba(0, 0, 0, 0.16);
  display: flex;
  align-items: center;
  justify-content: center;
  gap: 5px;
  i {
    width: 2px;
    height: 16px;
    background: #777;
  }
`;

const Square = styled.i`
  width: 18px;
  height: 18px;
  margin-left: ${(p) => p.$ml}px;
  background: ${(p) => p.$color};
`;

const Stats = styled.div`
  padding: 6px 2px 0 2px;
`;

const StatRow = styled.div`
  height: 47px;
  display: flex;
  align-items: center;
  justify-content: space-between;
`;

const Promo = styled.div`
  height: 16px;
  width: 1026px;
  margin: 0 auto;
  background: #fceee5;
  border-radius: 40px 40px 0 0 / 20px 20px 0 0;
`;

const BottomBar = styled.footer`
  height: 136px;
  background: #f7f8fa;
  border-top: 2px solid #dadada;
  display: flex;
`;

const Index = styled.div`
  width: 262px;
  display: flex;
  flex-direction: column;
`;

const NavItem = styled.div`
  width: 120px;
  margin-left: ${(p) => p.$ml}px;
  padding-top: 8px;
  display: flex;
  flex-direction: column;
  align-items: center;
  gap: 19px;
`;

const SystemNav = styled.div`
  flex: 1;
  background: #fcfcfc;
  display: flex;
  justify-content: center;
  align-items: center;
  gap: 185px;
`;

export default App;
